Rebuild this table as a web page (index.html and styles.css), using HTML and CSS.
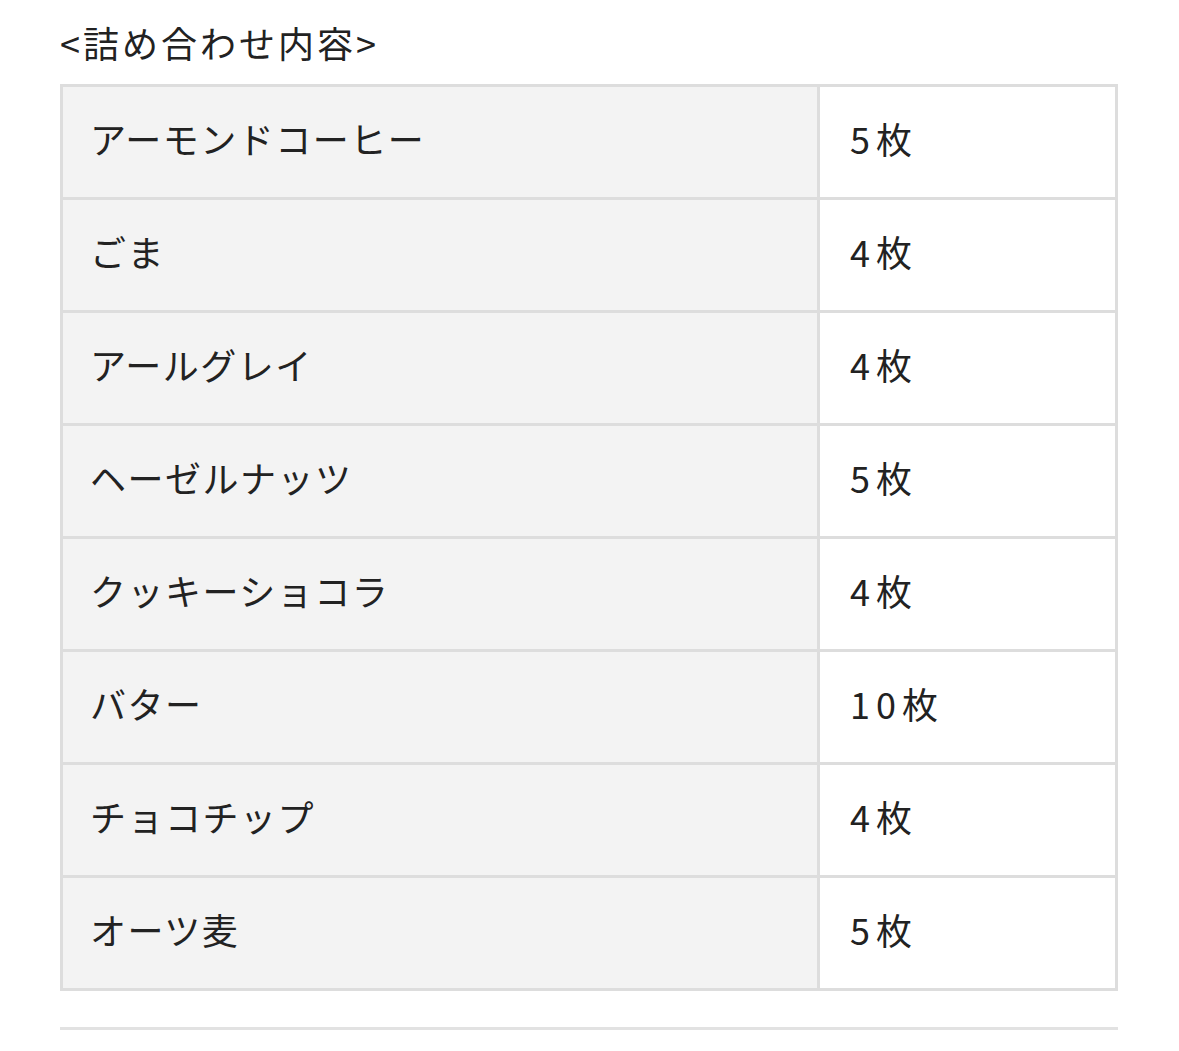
FILE: index.html
```html
<!DOCTYPE html>
<html lang="ja">
<head>
<meta charset="utf-8">
<link rel="stylesheet" href="styles.css">
</head>
<body>
<div class="wrap">
  <p class="title">&lt;詰め合わせ内容&gt;</p>
  <table class="contents">
    <colgroup><col class="col-name"><col class="col-qty"></colgroup>
    <tbody>
      <tr><th>アーモンドコーヒー</th><td>5枚</td></tr>
      <tr><th>ごま</th><td>4枚</td></tr>
      <tr><th>アールグレイ</th><td>4枚</td></tr>
      <tr><th>ヘーゼルナッツ</th><td>5枚</td></tr>
      <tr><th>クッキーショコラ</th><td>4枚</td></tr>
      <tr><th>バター</th><td>10枚</td></tr>
      <tr><th>チョコチップ</th><td>4枚</td></tr>
      <tr><th>オーツ麦</th><td>5枚</td></tr>
    </tbody>
  </table>
  <div class="rule"></div>
</div>
</body>
</html>
```
FILE: styles.css
```css
html, body {
  margin: 0;
  padding: 0;
  background: #fff;
}
body {
  font-family: "Noto Sans CJK JP", "Noto Sans", sans-serif;
  color: #222;
}
.wrap {
  width: 1058px;
  margin-left: 60px;
}
.title {
  margin: 15px 0 15px;
  font-size: 36px;
  line-height: 54px;
  letter-spacing: 3px;
}
.contents {
  width: 1058px;
  border-collapse: collapse;
  table-layout: fixed;
}
.col-name { width: 757px; }
.col-qty { width: 298px; }
.contents th,
.contents td {
  border: 3px solid #dddddd;
  padding: 26px 30px 34px;
  height: 50px;
  font-size: 36px;
  line-height: 50px;
  font-weight: normal;
  text-align: left;
  vertical-align: middle;
}
.contents th {
  background: #f3f3f3;
  padding-left: 27px;
  letter-spacing: 1.5px;
}
.contents td {
  background: #fff;
  letter-spacing: 6px;
}
.rule {
  margin-top: 36px;
  border-top: 3px solid #e2e2e2;
}
```
